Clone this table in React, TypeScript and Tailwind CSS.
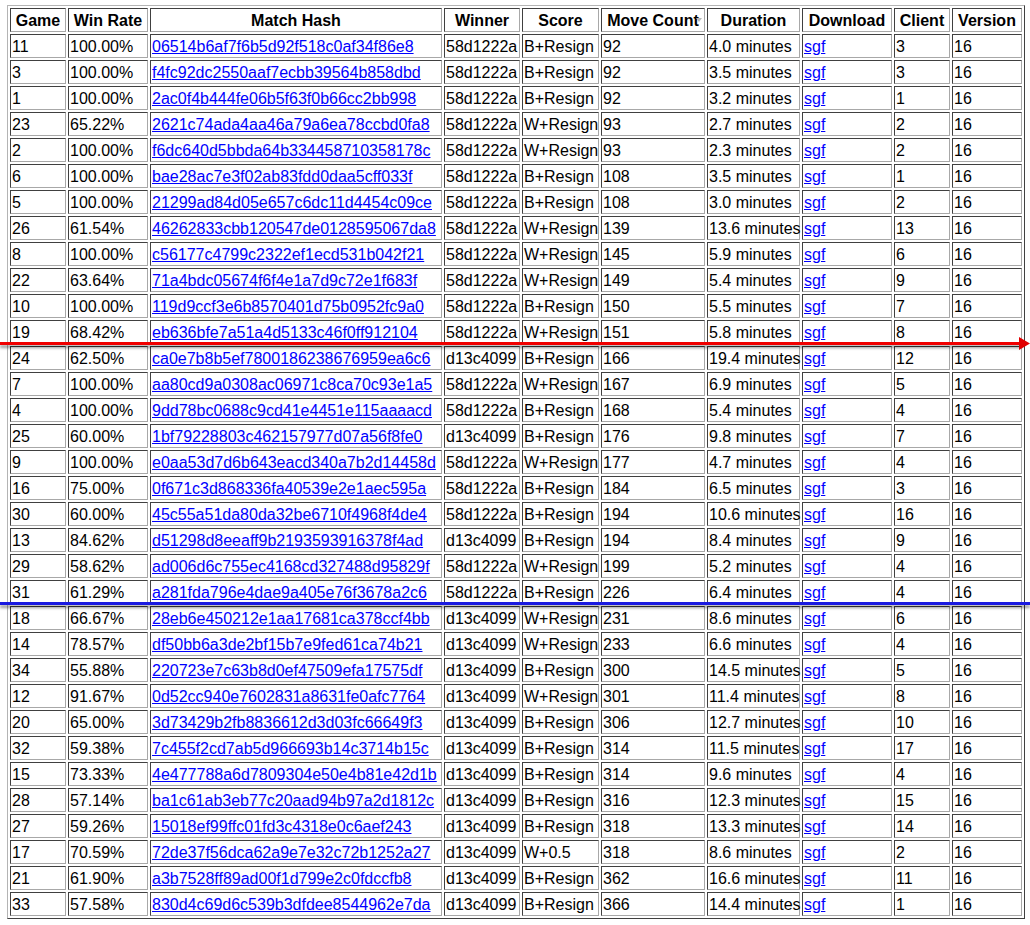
import * as React from 'react';

type Match = [string, string, string, string, string, string, string, string];

const rows: Match[] = [
    ['11', '100.00%', '06514b6af7f6b5d92f518c0af34f86e8', '58d1222a', 'B+Resign', '92', '4.0', '3'],
    ['3', '100.00%', 'f4fc92dc2550aaf7ecbb39564b858dbd', '58d1222a', 'B+Resign', '92', '3.5', '3'],
    ['1', '100.00%', '2ac0f4b444fe06b5f63f0b66cc2bb998', '58d1222a', 'B+Resign', '92', '3.2', '1'],
    ['23', '65.22%', '2621c74ada4aa46a79a6ea78ccbd0fa8', '58d1222a', 'W+Resign', '93', '2.7', '2'],
    ['2', '100.00%', 'f6dc640d5bbda64b334458710358178c', '58d1222a', 'W+Resign', '93', '2.3', '2'],
    ['6', '100.00%', 'bae28ac7e3f02ab83fdd0daa5cff033f', '58d1222a', 'B+Resign', '108', '3.5', '1'],
    ['5', '100.00%', '21299ad84d05e657c6dc11d4454c09ce', '58d1222a', 'B+Resign', '108', '3.0', '2'],
    ['26', '61.54%', '46262833cbb120547de0128595067da8', '58d1222a', 'W+Resign', '139', '13.6', '13'],
    ['8', '100.00%', 'c56177c4799c2322ef1ecd531b042f21', '58d1222a', 'W+Resign', '145', '5.9', '6'],
    ['22', '63.64%', '71a4bdc05674f6f4e1a7d9c72e1f683f', '58d1222a', 'W+Resign', '149', '5.4', '9'],
    ['10', '100.00%', '119d9ccf3e6b8570401d75b0952fc9a0', '58d1222a', 'B+Resign', '150', '5.5', '7'],
    ['19', '68.42%', 'eb636bfe7a51a4d5133c46f0ff912104', '58d1222a', 'W+Resign', '151', '5.8', '8'],
    ['24', '62.50%', 'ca0e7b8b5ef7800186238676959ea6c6', 'd13c4099', 'B+Resign', '166', '19.4', '12'],
    ['7', '100.00%', 'aa80cd9a0308ac06971c8ca70c93e1a5', '58d1222a', 'W+Resign', '167', '6.9', '5'],
    ['4', '100.00%', '9dd78bc0688c9cd41e4451e115aaaacd', '58d1222a', 'B+Resign', '168', '5.4', '4'],
    ['25', '60.00%', '1bf79228803c462157977d07a56f8fe0', 'd13c4099', 'B+Resign', '176', '9.8', '7'],
    ['9', '100.00%', 'e0aa53d7d6b643eacd340a7b2d14458d', '58d1222a', 'W+Resign', '177', '4.7', '4'],
    ['16', '75.00%', '0f671c3d868336fa40539e2e1aec595a', '58d1222a', 'B+Resign', '184', '6.5', '3'],
    ['30', '60.00%', '45c55a51da80da32be6710f4968f4de4', '58d1222a', 'B+Resign', '194', '10.6', '16'],
    ['13', '84.62%', 'd51298d8eeaff9b2193593916378f4ad', 'd13c4099', 'B+Resign', '194', '8.4', '9'],
    ['29', '58.62%', 'ad006d6c755ec4168cd327488d95829f', '58d1222a', 'W+Resign', '199', '5.2', '4'],
    ['31', '61.29%', 'a281fda796e4dae9a405e76f3678a2c6', '58d1222a', 'B+Resign', '226', '6.4', '4'],
    ['18', '66.67%', '28eb6e450212e1aa17681ca378ccf4bb', 'd13c4099', 'W+Resign', '231', '8.6', '6'],
    ['14', '78.57%', 'df50bb6a3de2bf15b7e9fed61ca74b21', 'd13c4099', 'W+Resign', '233', '6.6', '4'],
    ['34', '55.88%', '220723e7c63b8d0ef47509efa17575df', 'd13c4099', 'B+Resign', '300', '14.5', '5'],
    ['12', '91.67%', '0d52cc940e7602831a8631fe0afc7764', 'd13c4099', 'W+Resign', '301', '11.4', '8'],
    ['20', '65.00%', '3d73429b2fb8836612d3d03fc66649f3', 'd13c4099', 'B+Resign', '306', '12.7', '10'],
    ['32', '59.38%', '7c455f2cd7ab5d966693b14c3714b15c', 'd13c4099', 'B+Resign', '314', '11.5', '17'],
    ['15', '73.33%', '4e477788a6d7809304e50e4b81e42d1b', 'd13c4099', 'B+Resign', '314', '9.6', '4'],
    ['28', '57.14%', 'ba1c61ab3eb77c20aad94b97a2d1812c', 'd13c4099', 'B+Resign', '316', '12.3', '15'],
    ['27', '59.26%', '15018ef99ffc01fd3c4318e0c6aef243', 'd13c4099', 'B+Resign', '318', '13.3', '14'],
    ['17', '70.59%', '72de37f56dca62a9e7e32c72b1252a27', 'd13c4099', 'W+0.5', '318', '8.6', '2'],
    ['21', '61.90%', 'a3b7528ff89ad00f1d799e2c0fdccfb8', 'd13c4099', 'B+Resign', '362', '16.6', '11'],
    ['33', '57.58%', '830d4c69d6c539b3dfdee8544962e7da', 'd13c4099', 'B+Resign', '366', '14.4', '1'],
];

// inset look of an old-school border=1 table cell
const cell = 'border border-t-[#404040] border-l-[#404040] border-b-[#a8a8a8] border-r-[#a8a8a8] px-[1px] pt-[2px] pb-0 leading-[20px] whitespace-nowrap overflow-visible';

const headers: { label: string; w: string }[] = [
    { label: 'Game', w: 'w-[56px]' },
    { label: 'Win Rate', w: 'w-[80px]' },
    { label: 'Match Hash', w: 'w-[292px]' },
    { label: 'Winner', w: 'w-[76px]' },
    { label: 'Score', w: 'w-[77px]' },
    { label: 'Move Count', w: 'w-[104px]' },
    { label: 'Duration', w: 'w-[93px]' },
    { label: 'Download', w: 'w-[90px]' },
    { label: 'Client', w: 'w-[56px]' },
    { label: 'Version', w: 'w-[70px]' },
];

export default function App() {
    return (
        <div className="relative w-[1030px] min-h-[925px] bg-white pt-[5px] pl-[7px] text-black text-[16px] font-['Liberation_Sans',Arial,sans-serif]">
            <table className="table-fixed border-separate border-spacing-[2px] w-[1018px] border border-t-[#b4b4b4] border-l-[#b4b4b4] border-b-[#404040] border-r-[#404040]">
                <thead>
                    <tr>
                        {headers.map(h => (
                            <th key={h.label} className={`${cell} ${h.w} relative font-bold text-center`}>
                                {h.label}
                                {h.label === 'Move Count' && (
                                    <span className="absolute right-[2px] top-[9px] w-0 h-0 border-l-[3px] border-r-[3px] border-t-[4px] border-l-transparent border-r-transparent border-t-[#b8b8b8]" />
                                )}
                            </th>
                        ))}
                    </tr>
                </thead>
                <tbody>
                    {rows.map(r => (
                        <tr key={r[0]}>
                            <td className={cell}>{r[0]}</td>
                            <td className={cell}>{r[1]}</td>
                            <td className={cell}><a href="#" className="text-[#0000ff] underline">{r[2]}</a></td>
                            <td className={cell}>{r[3]}</td>
                            <td className={cell}>{r[4]}</td>
                            <td className={cell}>{r[5]}</td>
                            <td className={cell}>{r[6]} minutes</td>
                            <td className={cell}><a href="#" className="text-[#0000ff] underline">sgf</a></td>
                            <td className={cell}>{r[7]}</td>
                            <td className={cell}>16</td>
                        </tr>
                    ))}
                </tbody>
            </table>

            {/* annotation lines drawn over the table */}
            <div className="absolute left-0 top-[342px] w-[1022px] h-[3px] bg-[#f00000] shadow-[0_3px_3px_rgba(0,0,0,0.4)]" />
            <svg className="absolute left-[1019px] top-[337px]" width="11" height="13" viewBox="0 0 11 13">
                <polygon points="0,0 11,6.5 0,13" fill="#e00000" />
            </svg>
            <div className="absolute left-0 top-[602px] w-[1030px] h-[3px] bg-[#1a1ae0] shadow-[0_3px_3px_rgba(0,0,0,0.4)]" />
        </div>
    );
}
